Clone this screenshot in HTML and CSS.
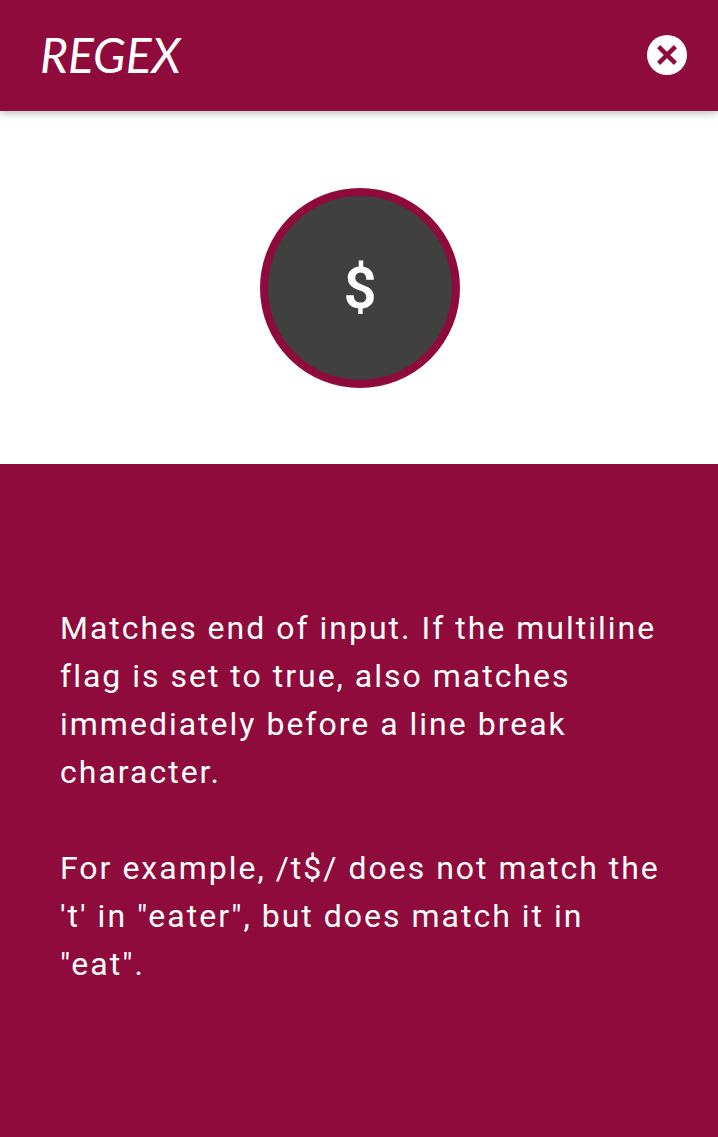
FILE: index.html
```html
<!DOCTYPE html>
<html lang="en">
<head>
<meta charset="utf-8">
<meta name="viewport" content="width=device-width, initial-scale=1">
<title>Regex</title>
<link rel="stylesheet" href="styles.css">
</head>
<body>
<header class="topbar">
  <h1 class="brand">REGEX</h1>
  <button class="close" type="button" aria-label="Close">
    <svg class="close-icon" viewBox="0 0 40 40" aria-hidden="true">
      <circle cx="20" cy="20" r="20" fill="#fff"/>
      <path d="M11.6 11.6 28.4 28.4M28.4 11.6 11.6 28.4" fill="none" stroke="#8e0b3b" stroke-width="4.4"/>
    </svg>
  </button>
</header>
<main class="content">
  <section class="hero">
    <div class="token">$</div>
  </section>
  <section class="description">
    <p>Matches end of input. If the multiline flag is set to true, also matches immediately before a line break character.</p>
    <p>For example, /t$/ does not match the 't' in "eater", but does match it in "eat".</p>
  </section>
</main>
</body>
</html>
```
FILE: styles.css
```css
* {
  box-sizing: border-box;
}

body {
  display: flex;
  flex-direction: column;
  min-height: 100vh;
  margin: 0;
  background: #fff;
  color: #fff;
  font-family: Roboto, "Liberation Sans", sans-serif;
}

.topbar {
  position: relative;
  display: flex;
  align-items: center;
  justify-content: space-between;
  padding: 27px 31px 28px 40px;
  background: #8e0b3b;
  box-shadow: 0 2px 8px rgba(0, 0, 0, 0.28);
}

.brand {
  margin: 0;
  font-family: "Rock Salt", Lato, sans-serif;
  font-size: 48px;
  font-style: italic;
  font-weight: 400;
  line-height: 56px;
}

.close {
  padding: 0;
  border: 0;
  background: none;
  cursor: pointer;
}

.close-icon {
  display: block;
  width: 40px;
  height: 40px;
}

.content {
  display: flex;
  flex: 1;
  flex-direction: column;
}

.hero {
  display: flex;
  justify-content: center;
  padding: 77px 0 76px 2px;
}

.token {
  display: flex;
  align-items: center;
  justify-content: center;
  width: 200px;
  height: 200px;
  border: 8px solid #8e0b3b;
  border-radius: 50%;
  background: #404040;
  font-size: 58px;
  font-weight: 600;
}

.description {
  flex: 1;
  padding: 140px 56px 140px 60px;
  background: #8e0b3b;
  font-size: 32px;
  letter-spacing: 2px;
  line-height: 48px;
}

.description p {
  margin: 0 0 48px;
}

.description p:last-child {
  margin-bottom: 0;
}
```
